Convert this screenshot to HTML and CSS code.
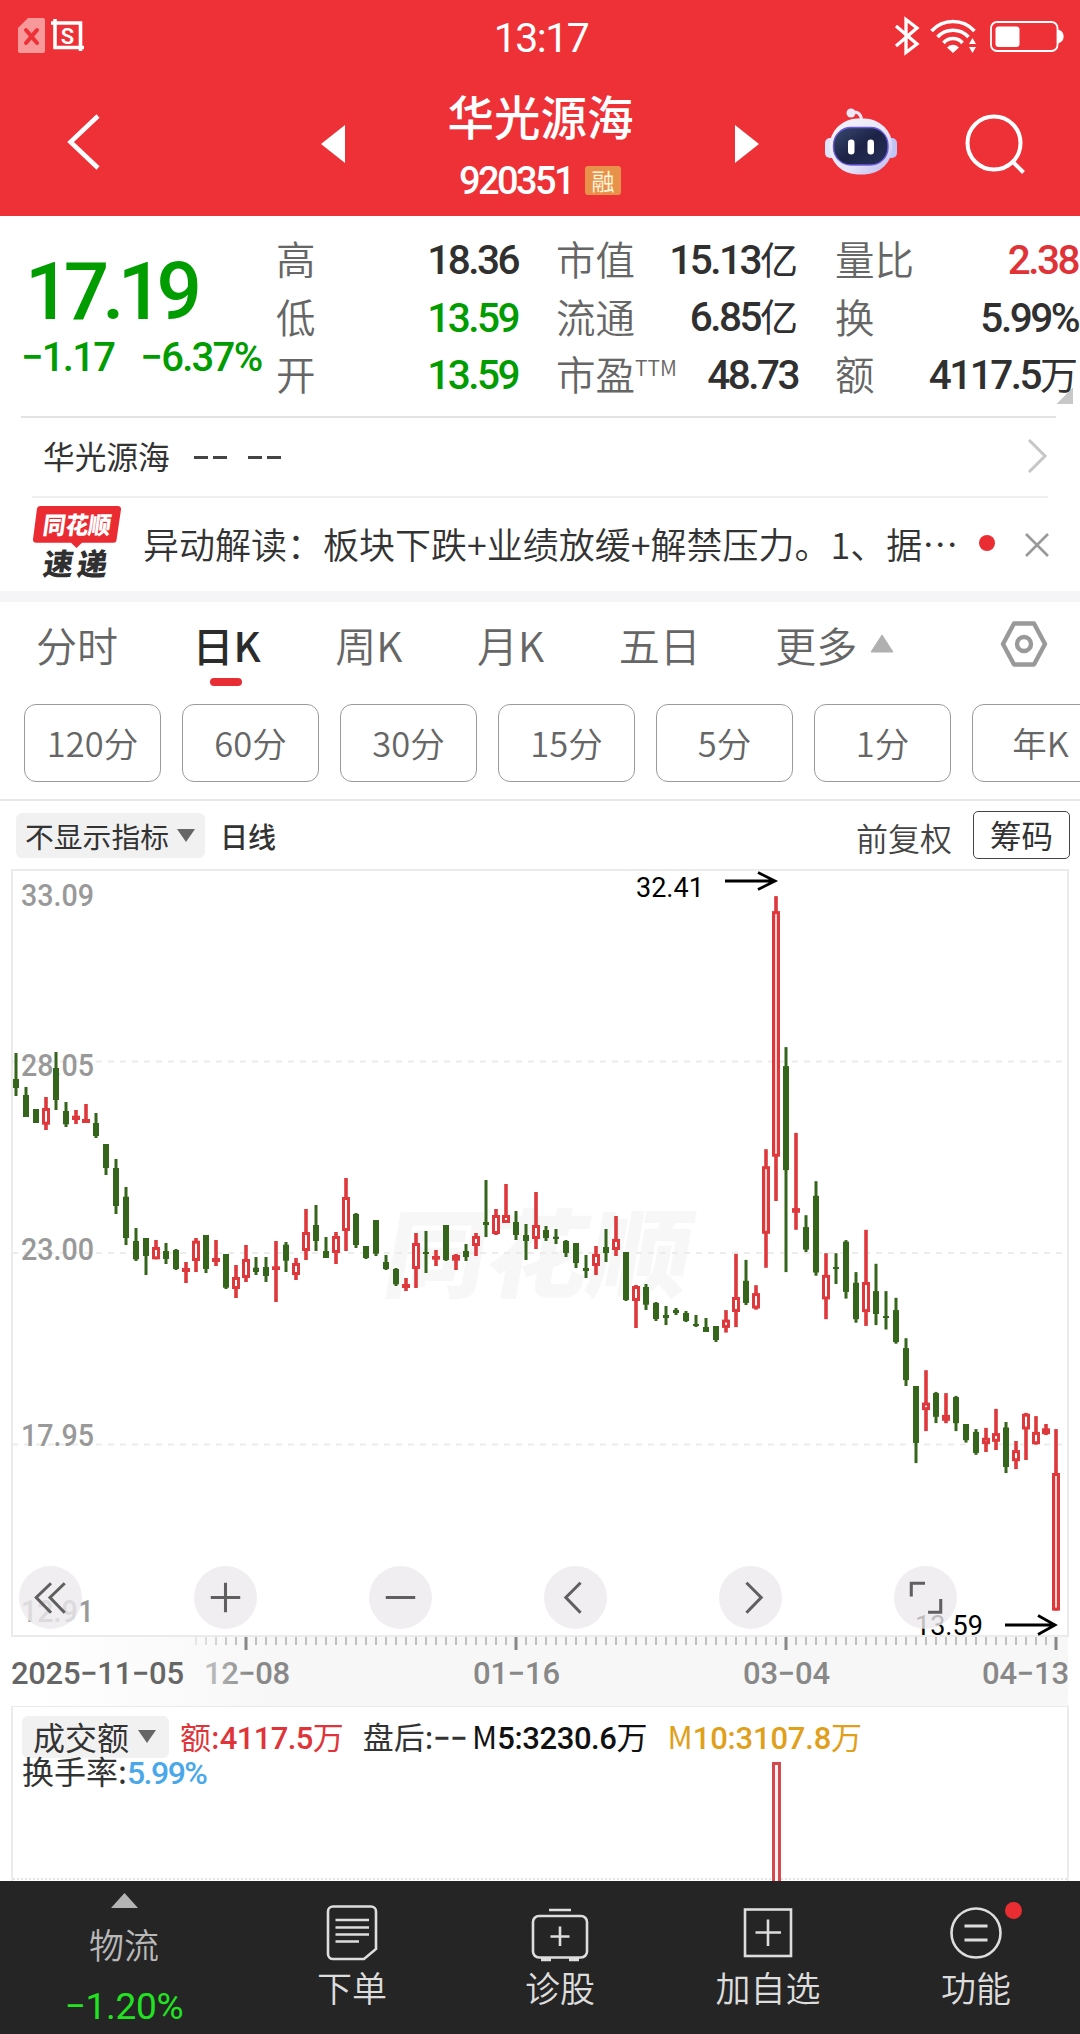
FILE: index.html
```html
<!DOCTYPE html>
<html lang="zh-CN">
<head>
<meta charset="utf-8">
<title>华光源海 920351</title>
<link rel="stylesheet" href="styles.css">
</head>
<body>
<div class="app">
  <header class="header">
    <div class="status">
      <svg class="status-left" width="70" height="40" viewBox="0 0 70 40">
        <path d="M10 2h15a2 2 0 0 1 2 2v31a2 2 0 0 1-2 2H2a2 2 0 0 1-2-2V12z" fill="#fff" opacity=".5"/>
        <path d="M8 14l11 13M19 14L8 27" stroke="#ee3037" stroke-width="4" stroke-linecap="round"/>
        <path d="M33 7h29.500v28M37 3v28.500h29" fill="none" stroke="#fff" stroke-width="3.600"/>
        <text x="49.500" y="27.500" class="crop-s" text-anchor="middle">S</text>
      </svg>
      <time class="clock">13:17</time>
      <svg class="status-right" width="170" height="40" viewBox="0 0 170 40">
        <path d="M2 10l21 18-11 8.500V3.500L23 12 2 30" fill="none" stroke="#fff" stroke-width="3.300"/>
        <g fill="none" stroke="#fff" stroke-width="3.500">
          <path d="M37.500 15a29 29 0 0 1 43 0"/><path d="M43.500 21a21 21 0 0 1 31 0"/><path d="M49.500 27a12.500 12.500 0 0 1 19 0"/>
        </g>
        <path d="M59 37l-6-5.500a8 8 0 0 1 12 0zM75 28l3.500-6 3.500 6zM75 31l3.500 6 3.500-6z" fill="#fff"/>
        <rect x="97" y="6" width="66.500" height="29" rx="6" fill="none" stroke="#fff" stroke-width="1.800"/>
        <rect x="101.500" y="10.500" width="24" height="20.500" rx="3" fill="#fff"/>
        <path d="M165 15a6 6 0 0 1 0 11z" fill="#fff" stroke="#fff" stroke-width="2"/>
      </svg>
    </div>
    <div class="titlebar">
      <svg class="tb-back" width="40" height="60" viewBox="0 0 40 60"><path d="M31 4L3.500 30 31 56" fill="none" stroke="#fff" stroke-width="4.500"/></svg>
      <svg class="tb-prev" width="24" height="38" viewBox="0 0 24 38"><path d="M0 19L24 0v38z" fill="#fff"/></svg>
      <div class="stock">
        <h1 class="stock-name">华光源海</h1>
        <div class="stock-code"><span class="code">920351</span><span class="tag">融</span></div>
      </div>
      <svg class="tb-next" width="24" height="38" viewBox="0 0 24 38"><path d="M24 19L0 0v38z" fill="#fff"/></svg>
      <svg class="tb-robot" width="74" height="70" viewBox="0 0 74 70">
        <defs>
          <linearGradient id="shell" x1="0" y1="0" x2="1" y2="1"><stop offset="0" stop-color="#f6f6fb"/><stop offset=".6" stop-color="#e6e4f8"/><stop offset="1" stop-color="#b9b4ee"/></linearGradient>
          <linearGradient id="face" x1="0" y1="0" x2="1" y2="1"><stop offset="0" stop-color="#3a4a70"/><stop offset=".5" stop-color="#1c2346"/><stop offset="1" stop-color="#28305a"/></linearGradient>
        </defs>
        <path d="M26 5.500Q36 3 37.500 12" fill="none" stroke="#eae6f8" stroke-width="3"/>
        <circle cx="27" cy="6" r="4.500" fill="#ece8f8"/>
        <rect x="1" y="31" width="11" height="20" rx="5" fill="#dfe3fa"/><rect x="62" y="31" width="11" height="20" rx="5" fill="#bfc3f6"/>
        <rect x="5.500" y="11.500" width="63" height="56" rx="28" fill="url(#shell)"/>
        <rect x="9.500" y="20.500" width="54.500" height="37.500" rx="17.500" fill="url(#face)" stroke="#6c5be0" stroke-width="1.400"/>
        <rect x="24" y="32.500" width="6.500" height="15" rx="3.200" fill="#fff"/><rect x="43.500" y="32.500" width="6.500" height="15" rx="3.200" fill="#fff"/>
      </svg>
      <svg class="tb-search" width="62" height="62" viewBox="0 0 62 62"><g fill="none" stroke="#fff" stroke-width="4"><circle cx="29" cy="30" r="26.500"/><path d="M48 49l10.500 10.500"/></g></svg>
    </div>
  </header>

  <section class="quote">
    <div class="price-block">
      <div class="price num">17.19</div>
      <div class="change num"><span>−1.17</span><span>−6.37%</span></div>
    </div>
    <dl class="stats stats-a">
      <dt>高</dt><dd class="num">18.36</dd>
      <dt>低</dt><dd class="num down">13.59</dd>
      <dt>开</dt><dd class="num down">13.59</dd>
    </dl>
    <dl class="stats stats-b">
      <dt>市值</dt><dd class="num">15.13<i>亿</i></dd>
      <dt>流通</dt><dd class="num">6.85<i>亿</i></dd>
      <dt>市盈<sup>TTM</sup></dt><dd class="num">48.73</dd>
    </dl>
    <dl class="stats stats-c">
      <dt>量比</dt><dd class="num up">2.38</dd>
      <dt>换</dt><dd class="num">5.99%</dd>
      <dt>额</dt><dd class="num">4117.5<i>万</i></dd>
    </dl>
    <span class="corner"></span>
  </section>

  <section class="linked">
    <span class="linked-name">华光源海</span><span class="dashes"><b></b><b></b></span><span class="dashes"><b></b><b></b></span>
    <svg class="linked-go" width="22" height="38" viewBox="0 0 22 38"><path d="M2 2l16 16L2 34" fill="none" stroke="#c6c6c6" stroke-width="3"/></svg>
  </section>

  <section class="news">
    <svg class="news-logo" width="92" height="76" viewBox="0 0 92 76">
      <path d="M8 2H86a3 3 0 0 1 3 3.500L84.500 36a3 3 0 0 1-3 2.800H50l-5.500 5.200-5.500-5.200H4a3 3 0 0 1-3-3.500L5 4.500A3 3 0 0 1 8 2z" fill="#ea2c32"/>
      <text class="logo-top" x="0" y="0" textLength="68" lengthAdjust="spacingAndGlyphs" transform="translate(10 30) skewX(-8)">同花顺</text>
      <text class="logo-bottom" x="0 34" y="0" transform="translate(10 70.500) skewX(-8)">速递</text>
    </svg>
    <p class="news-text">异动解读：板块下跌+业绩放缓+解禁压力。1、据…</p>
    <span class="news-dot"></span>
    <svg width="26" height="26" viewBox="0 0 26 26"><path d="M2 2l22 22M24 2L2 24" stroke="#999" stroke-width="2.600"/></svg>
  </section>

  <nav class="tabs">
    <a class="tab">分时</a><a class="tab active">日K</a><a class="tab">周K</a><a class="tab">月K</a><a class="tab">五日</a>
    <a class="tab more">更多<svg width="24" height="19" viewBox="0 0 24 19"><path d="M12 1l11 17H1z" fill="#b0b0b0" stroke="#b0b0b0" stroke-linejoin="round"/></svg></a>
    <svg class="gear" width="50" height="50" viewBox="0 0 50 50"><g fill="none" stroke="#999" stroke-width="4.400" stroke-linejoin="round"><path d="M15 4.500H35L46 25 35 45.500H15L4 25z"/><circle cx="25" cy="25" r="7"/></g></svg>
  </nav>

  <div class="chips">
    <a class="chip">120分</a><a class="chip">60分</a><a class="chip">30分</a><a class="chip">15分</a><a class="chip">5分</a><a class="chip">1分</a><a class="chip">年K</a>
  </div>

  <div class="chart-bar">
    <span class="pill">不显示指标<i class="caret"></i></span><span class="period">日线</span>
    <span class="adjust">前复权</span><span class="chipbtn">筹码</span>
  </div>

  <section class="chart">
    <svg id="kline" width="1080" height="838" viewBox="0 868 1080 838">
      <defs>
        <linearGradient id="axisfade"><stop offset=".02" stop-color="#f7f7f7" stop-opacity="0"/><stop offset=".25" stop-color="#f7f7f7"/></linearGradient>
        <linearGradient id="axisdate" gradientUnits="userSpaceOnUse" x1="204" x2="250" y1="0" y2="0"><stop offset="0" stop-color="#c4c4c4"/><stop offset="1" stop-color="#888"/></linearGradient>
      </defs>
      <rect x="12" y="1636" width="1056" height="70" fill="url(#axisfade)"/>
      <text class="watermark" textLength="306" lengthAdjust="spacingAndGlyphs" transform="translate(380 1290) skewX(-10)">同花顺</text>
      <g class="grid"><path d="M12 1061.500H1066M12 1253H1066M12 1444.500H1066"/></g>
      <rect class="frame" x="12" y="870" width="1056" height="766"/>
      <g class="ylabels"><text x="21" y="906" textLength="73" lengthAdjust="spacingAndGlyphs">33.09</text><text x="21" y="1076" textLength="73" lengthAdjust="spacingAndGlyphs">28.05</text><text x="21" y="1260" textLength="73" lengthAdjust="spacingAndGlyphs">23.00</text><text x="21" y="1445.500" textLength="73" lengthAdjust="spacingAndGlyphs">17.95</text><text x="21" y="1622" textLength="73" lengthAdjust="spacingAndGlyphs">12.91</text></g>
      <g id="candles"></g>
      <g class="extreme"><text x="636" y="897">32.41</text><text x="915" y="1635">13.59</text>
        <path d="M725 881H775M758 872.500L775 881 758 889.500M1005 1625H1055M1038 1615.500L1055 1625 1038 1634.500"/></g>
      <g id="ticks"></g>
      <g class="dates"><text class="first" x="11" y="1684" textLength="173">2025−11−05</text><text fill="url(#axisdate)" x="204" y="1684" textLength="86">12−08</text><text x="473" y="1684" textLength="87">01−16</text><text x="743" y="1684" textLength="87">03−04</text><text x="982" y="1684" textLength="87">04−13</text></g>
    </svg>
    <div class="tools">
      <button class="tool"><svg viewBox="0 0 62 62"><path d="M31.500 17L17 31l14.500 15M45 17L30.500 31 45 46"/></svg></button>
      <button class="tool"><svg viewBox="0 0 62 62"><path d="M31 16.500v29M16.500 31h29"/></svg></button>
      <button class="tool"><svg viewBox="0 0 62 62"><path d="M16.500 31h29"/></svg></button>
      <button class="tool"><svg viewBox="0 0 62 62"><path d="M36 16.500L21.500 31 36 46"/></svg></button>
      <button class="tool"><svg viewBox="0 0 62 62"><path d="M27 16.500L41.500 31 27 46"/></svg></button>
      <button class="tool"><svg viewBox="0 0 62 62"><path d="M17 30V17h13.500M33.500 45.500H46v-13"/></svg></button>
    </div>
  </section>

  <section class="volume">
    <div class="legend">
      <span class="pill">成交额<i class="caret"></i></span>
      <span class="lg-amount">额:<b>4117.5</b>万</span>
      <span class="lg-after">盘后:<b>−−</b></span><span class="lg-m5">M<b>5:3230.6</b>万</span>
      <span class="lg-m10">M<b>10:3107.8</b>万</span>
    </div>
    <div class="turnover">换手率:<b>5.99%</b></div>
    <span class="vol-bar"></span>
  </section>

  <footer class="nav">
    <a class="nav-index"><svg width="27" height="15" viewBox="0 0 27 15"><path d="M13.500 0L27 15H0z" fill="#b4b4b4"/></svg><span class="idx">物流</span><span class="idx-chg">−1.20%</span></a>
    <a class="nav-item"><svg width="60" height="60" viewBox="0 0 60 60"><g fill="none" stroke="#ddd" stroke-width="2.600"><path d="M11 4.500H49a5 5 0 0 1 5 5V47L42 57H11a5 5 0 0 1-5-5V9.500a5 5 0 0 1 5-5z"/><path d="M13.500 18H47M13.500 25.500H47M13.500 32.500H47M13.500 39.500H37"/></g></svg>下单</a>
    <a class="nav-item"><svg width="60" height="60" viewBox="0 0 60 60"><g fill="none" stroke="#ddd" stroke-width="2.600"><rect x="3" y="14" width="54" height="41.500" rx="6"/><path d="M19 8H41M30 24.500V44M20.500 34.500H39.500"/><path d="M11 57.500H21M39 57.500H49" stroke-width="3.400"/></g></svg>诊股</a>
    <a class="nav-item"><svg width="60" height="60" viewBox="0 0 60 60"><g fill="none" stroke="#ddd" stroke-width="2.600"><rect x="7" y="7.500" width="46" height="46.500"/><path d="M30 17.500V44M17.500 30.500H43"/></g></svg>加自选</a>
    <a class="nav-item"><svg width="60" height="60" viewBox="0 0 60 60"><g fill="none" stroke="#ddd" stroke-width="2.600"><circle cx="30" cy="31" r="24.500"/><path d="M18.500 24H41.500M18.500 38H41.500" stroke-width="3"/></g></svg>功能<i class="badge"></i></a>
  </footer>
</div>
<script src="chart.js"></script>
</body>
</html>
```
FILE: styles.css
```css
* { box-sizing: border-box; }
body { margin: 0; background: #fff; font-family: "Noto Sans CJK SC", sans-serif; color: #333; }
i { font-style: normal; }
.app { width: 1080px; height: 2034px; overflow: hidden; display: flex; flex-direction: column; }
.app > * { flex: none; }
svg { display: block; flex: none; }
.num, .clock, .code { font-family: Roboto, "Noto Sans CJK SC", sans-serif; font-weight: 500; }

.header { height: 216px; background: #ee3037; color: #fff; }
.status { height: 74px; padding: 16px 16px 0 18px; display: grid; grid-template-columns: 1fr auto 1fr; }
.status-right { justify-self: end; }
.crop-s { font: 600 22px Roboto, sans-serif; fill: #fff; }
.clock { font-size: 41px; font-weight: 400; line-height: 44px; letter-spacing: -1.500px; }
.titlebar { height: 142px; display: flex; align-items: flex-start; }
.tb-back { margin: 38px 0 0 67px; }
.tb-prev { margin: 51px 0 0 214px; }
.stock { width: 390px; display: flex; flex-direction: column; align-items: center; }
.stock-name { margin: 13px 0 0 1px; font-size: 46.500px; line-height: 56px; font-weight: 500; }
.stock-code { margin-top: 18px; display: flex; align-items: center; gap: 12px; height: 40px; }
.code { font-size: 38px; letter-spacing: -2.600px; line-height: 40px; }
.tag { width: 36px; height: 29px; margin-top: -2px; border-radius: 3px; background: #e8914a; color: #fff6dc; font-size: 23px; line-height: 28px; text-align: center; }
.tb-next { margin-top: 51px; }
.tb-robot { margin: 33px 0 0 65px; }
.tb-search { margin: 39px 0 0 67px; }

.quote { position: relative; height: 200px; padding: 15px 0 0 23px; display: flex; }
.price-block { width: 253px; color: #009c00; }
.price { margin: 21px 0 0 2px; font-size: 80px; line-height: 80px; letter-spacing: -6.800px; }
.change { margin: 6px 0 0 -2px; display: flex; gap: 26px; font-size: 40px; line-height: 40px; letter-spacing: -1.700px; white-space: nowrap; }
.stats { margin: 0; display: grid; grid-template-columns: auto 1fr; grid-auto-rows: 57.500px; align-items: center; }
.stats dt { margin-top: -4px; font-size: 39.500px; line-height: 57px; font-weight: 350; color: #666; white-space: nowrap; }
.stats dd { margin: 2px 0 0; text-align: right; font-size: 40.500px; line-height: 57px; letter-spacing: -2.500px; color: #303030; white-space: nowrap; }
.stats dd i { font-size: 38px; letter-spacing: 0; font-weight: 400; }
.stats dd.down { color: #009c00; }
.stats dd.up { color: #e03338; }
.stats sup { font-size: 21px; line-height: 0; vertical-align: 14px; font-weight: 350; margin-right: -41px; }
.stats-a { width: 242px; }
.stats-b { width: 242px; margin-left: 38px; }
.stats-c { width: 243px; margin-left: 37px; }
.corner { position: absolute; right: 7px; top: 171px; width: 17px; height: 17px; background: linear-gradient(135deg, transparent 50%, #c8c8c8 50%); }

.linked { height: 80px; margin: 0 24px 0 21px; border-top: 2px solid #e3e3e3; padding: 0 7px 0 22px; display: flex; align-items: center; font-size: 31.700px; }
.linked-name { margin: -4px 24px 0 0; }
.dashes { display: flex; gap: 5px; margin-right: 21px; }
.dashes b { width: 14px; height: 3px; background: #444; }
.linked-go { margin-left: auto; }
.news { height: 95px; margin: 0 32px; border-top: 2px solid #f1f0f0; display: flex; align-items: center; }
.news-logo { margin-top: -5px; }
.logo-top { font: 900 24px "Noto Sans CJK SC", sans-serif; fill: #fff; }
.logo-bottom { font: 900 30px "Noto Sans CJK SC", sans-serif; fill: #303030; }
.news-text { margin: -4px 21px 0 19px; width: 817px; font-size: 36px; line-height: 50px; font-weight: 350; white-space: nowrap; }
.news-dot { flex: none; width: 16px; height: 16px; border-radius: 50%; background: #ea2d33; margin: -3px 29px 0 0; }

.tabs { height: 113px; border-top: 11px solid #f5f4f6; padding: 0 31px 0 36px; display: flex; align-items: center; font-size: 41px; font-weight: 350; color: #666; line-height: 86px; padding-bottom: 19px; }
.tab { position: relative; }
.tab + .tab { margin-left: 74.500px; }
.tab.active { color: #2b2b2b; font-weight: 500; }
.tab.active::after { content: ""; position: absolute; left: 17px; bottom: 1px; width: 32px; height: 8px; border-radius: 4px; background: #e62e34; }
.more { display: flex; align-items: center; gap: 13px; }
.more svg { margin-top: -1px; }
.gear { margin-left: auto; }
.chips { height: 97px; padding: 0 0 0 24px; display: flex; gap: 21px; border-bottom: 2px solid #e8e8e8; overflow: hidden; }
.chip { flex: none; width: 137px; height: 78px; border: 1.500px solid #9a9a9a; border-radius: 12px; font-size: 34.500px; font-weight: 350; line-height: 75px; text-align: center; color: #666; }

.chart-bar { height: 67px; padding: 12px 10px 0 16px; display: flex; align-items: flex-start; }
.pill { height: 45px; border-radius: 6px; background: #f1f1f1; display: flex; align-items: center; padding: 0 10px 0 9px; font-size: 28.800px; gap: 8px; }
.caret { border: 9px solid transparent; border-top: 13px solid #666; border-bottom: 0; }
.period { margin-left: 15px; font-size: 28px; font-weight: 500; line-height: 46px; }
.adjust { margin-left: auto; font-size: 32px; line-height: 48px; font-weight: 350; color: #444; }
.chipbtn { margin: -2px 0 0 21px; width: 97px; height: 48px; border: 1.500px solid #444; border-radius: 5px; font-size: 31.500px; line-height: 44px; text-align: center; }

.chart { position: relative; height: 838px; }
.watermark { font: 900 96px "Noto Sans CJK SC", sans-serif; fill: #f7f7f7; }
.grid { fill: none; stroke: #ececec; stroke-width: 2; stroke-dasharray: 6 6; }
.frame { fill: none; stroke: #ebebeb; stroke-width: 2; }
.ylabels { font: 500 31px Roboto, sans-serif; fill: #999; }
.extreme { font: 400 27px Roboto, sans-serif; fill: #000; }
.extreme path { fill: none; stroke: #000; stroke-width: 2.800; }
.dates { font: 500 31px Roboto, sans-serif; fill: #888; }
.dates .first { fill: #666; }
.tools { position: absolute; left: 19px; top: 698px; width: 938px; display: flex; justify-content: space-between; }
.tool { width: 63px; height: 63px; padding: 0; border: 0; border-radius: 50%; background: rgba(236, 234, 236, .8); }
.tool path { fill: none; stroke: #5f5f5f; stroke-width: 3; }

.volume { position: relative; height: 175px; margin: 0 11px; border: 2px solid #ebebeb; border-top-width: 1px; border-bottom: 0; padding: 8px 0 0 9px; }
.volume::after { content: ""; position: absolute; left: 0; right: 0; top: 171px; border-top: 2px dotted #e4e4e4; }
.legend { display: flex; align-items: center; height: 44px; font-size: 31px; white-space: nowrap; }
.legend span { margin-top: -4px; }
.legend .pill { height: 42px; width: 147px; margin-top: 0; padding: 0 0 2px 11px; font-size: 32px; gap: 9px; }
.legend b, .turnover b { font-family: Roboto, sans-serif; font-weight: 500; letter-spacing: -.600px; }
.lg-amount { margin-left: 11px; color: #df3439; }
.lg-after { margin-left: 19px; }
.lg-m5 { color: #111; margin-left: 5px; }
.legend .lg-m5 b { letter-spacing: -.400px; }
.lg-m10 { margin-left: 20px; color: #e0a01c; }
.legend .lg-m10 b { letter-spacing: -.200px; }
.turnover { margin-top: -4px; font-size: 32px; line-height: 30px; }
.turnover b { color: #4aa8ea; letter-spacing: -1.500px; }
.vol-bar { position: absolute; z-index: 1; left: 759px; top: 55px; width: 9px; height: 130px; border: 3px solid #d4494e; background: #fff3f3; }

.nav { position: relative; z-index: 2; height: 153px; background: #252525; display: flex; color: #ddd; font-size: 35px; font-weight: 350; }
.nav-index { width: 248px; padding-top: 12px; display: flex; flex-direction: column; align-items: center; }
.idx { margin-top: 11px; line-height: 50px; color: #b8b8b8; }
.idx-chg { margin-top: 13px; font: 400 37px/50px Roboto, sans-serif; color: #22e322; letter-spacing: -.300px; }
.nav-item { position: relative; width: 208px; padding-top: 21px; display: flex; flex-direction: column; align-items: center; line-height: 50px; }
.badge { position: absolute; left: 133px; top: 21px; width: 17px; height: 17px; border-radius: 50%; background: #ea2d33; }
```
FILE: chart.js
```js
// Daily bars: [direction, high, body top, body bottom, low] on the chart's vertical scale.
const near = (base, scale, rows) => rows.map(([d, ...v]) => [d, ...v.map(n => base + n / scale)]);
const bars = [
  ...near(1030, 3, [
    ['g',69,147,174,198],['g',171,195,261,261],['g',237,237,279,279],['r',201,234,284,300],['g',66,114,210,240],
    ['g',216,243,283,291],['r',240,257,270,282],['r',222,267,279,279],['g',249,279,318,324],['g',342,342,414,435],
    ['g',387,414,528,552],['g',471,500,624,645],['g',594,633,688,693],['g',624,624,678,735],['r',630,651,688,688],
    ['g',639,663,687,702],['g',657,660,717,720],['r',696,714,726,759],['r',624,632,693,726],['g',615,615,717,729],
    ['r',630,684,696,708],['g',672,672,773,777],['r',705,741,777,804],['r',645,687,744,756],['g',681,713,726,735],
    ['g',681,711,738,756],['r',633,709,720,816],['g',636,644,692,726],['r',684,699,735,750],['r',537,606,663,690],
    ['g',525,585,633,663],['g',621,663,684,684],['r',606,618,669,702],['r',444,501,603,663],['g',549,552,645,654]]),
  ...near(1130, 3, [
    ['g',348,348,384,387],['g',270,270,371,378],['g',375,396,417,420],['g',414,417,463,468],['r',444,462,474,483],
    ['r',309,339,417,474],['g',303,366,372,429],['r',360,378,389,408],['g',285,285,390,393],['r',372,375,392,420],
    ['g',342,363,381,393],['r',309,318,348,378],['g',150,276,285,321],['r',237,255,312,315],['r',162,255,279,279],
    ['g',243,276,315,330],['g',282,315,333,390],['r',186,285,327,357],['g',288,300,324,333],['g',297,320,327,342],
    ['g',330,333,369,381],['g',339,339,399,414],['g',375,414,423,444],['r',348,372,408,435],['g',297,351,369,396],
    ['r',258,327,360,378],['g',366,366,510,513],['r',465,468,513,594],['g',462,471,524,540],['g',516,519,567,573],
    ['g',528,555,564,585],['g',534,540,549,555],['g',543,549,573,576],['g',555,582,588,591],['g',564,591,606,606],
    ['g',588,588,630,636]]),
  ...near(870, 2.529, [
    ['r',1113,1137,1158,1170],['r',971,1080,1118,1156],['g',986,1039,1095,1100],['r',1050,1070,1109,1112],
    ['r',706,749,920,1006],['r',66,104,725,837],['g',448,496,759,1017],['r',665,855,867,910],['g',873,903,960,966],
    ['g',787,824,1018,1026],['r',969,1024,1086,1136],['g',969,1004,1009,1047],['g',936,940,1067,1084],['g',1017,1044,1136,1145],
    ['r',910,1042,1118,1153],['g',996,1065,1123,1151],['g',1065,1128,1133,1162],['g',1082,1113,1194,1198],['g',1184,1209,1290,1305],
    ['g',1305,1305,1449,1500],['r',1265,1347,1366,1419],['g',1320,1323,1383,1399],['r',1323,1378,1393,1399],['g',1330,1333,1399,1419],
    ['g',1401,1401,1442,1448],['g',1414,1421,1474,1479],['r',1411,1436,1452,1472],['r',1363,1424,1446,1467],['g',1396,1410,1510,1525],
    ['r',1444,1467,1495,1515],['r',1373,1375,1415,1492],['r',1381,1421,1452,1453],['r',1401,1412,1427,1429],['r',1414,1525,1873,1873]])
];
const rect = (x, y, w, h, fill) => `<rect x="${x}" y="${y.toFixed(1)}" width="${w}" height="${h.toFixed(1)}" fill="${fill}"/>`;
document.getElementById('candles').innerHTML = bars.map(([dir, hi, top, bot, lo], i) => {
  const x = 16 + i * 10, color = dir === 'g' ? '#35651a' : '#dd393c';
  const half = dir === 'g' ? 3 : 4, wick = dir === 'g' ? 3 : 3.6;
  let out = rect(x - wick / 2, hi, wick, lo - hi, color) + rect(x - half, top, half * 2, bot - top, color);
  if (dir === 'r' && bot - top > 6) out += rect(x - 1, top + 3, 2, bot - top - 6, bot - top > 40 ? '#fbd3d0' : '#fff');
  return out;
}).join('');

let ticks = '';
for (let x = 196; x <= 1056; x += 10) {
  const major = (x - 246) % 270 === 0;
  ticks += `<rect x="${major ? x - 1.5 : x - 0.5}" y="1637" width="${major ? 3 : 1}" height="${major ? 13 : 8}" fill="#888" opacity="${Math.min(1, (x - 176) / 60)}"/>`;
}
document.getElementById('ticks').innerHTML = ticks;
```
